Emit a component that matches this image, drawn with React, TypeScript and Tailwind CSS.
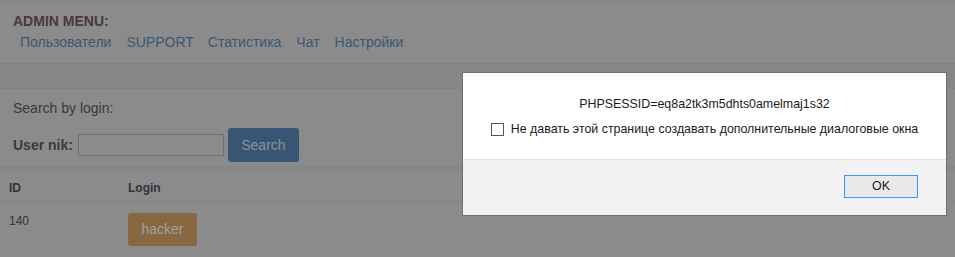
export default function App() {
  return (
    <div className="relative w-[955px] h-[257px] overflow-hidden bg-[#878787]" style={{ fontFamily: '"Liberation Sans", Arial, sans-serif' }}>
      <div className="pt-[2px]">
        <div className="h-[62px] bg-[#8b8b8b] border-b border-[#838383] pl-[13px] pt-[11px]">
          <div className="text-[14px] font-bold text-[#4a383a] leading-[16px]">ADMIN MENU:</div>
          <div className="flex gap-[15px] pl-[7px] mt-[5px] text-[14px] leading-[16px] text-[#3b5872]">
            <span>Пользователи</span>
            <span>SUPPORT</span>
            <span className="ml-[-1px]">Статистика</span>
            <span>Чат</span>
            <span>Настройки</span>
          </div>
        </div>
        <div className="h-[24px]" />
        <div className="h-[79px] bg-[#8b8b8b] border-y border-[#838383] pl-[13px] pt-[11px]">
          <div className="text-[14px] leading-[16px] text-[#3a3a3a]">Search by login:</div>
          <div className="flex items-center mt-[12px]">
            <span className="text-[14px] font-bold text-[#3d3842]">User nik:</span>
            <div className="ml-[5px] w-[146px] h-[22px] border border-[#6e6e6e] bg-[#8c8c8c]" />
            <div className="ml-[4px] w-[71px] h-[34px] rounded-[3px] bg-[#385673] flex items-center justify-center text-[14px] text-[#87929c]">Search</div>
          </div>
        </div>
        <div className="h-[3px]" />
        <div className="bg-[#8b8b8b] border-t border-[#848484]">
          <div className="flex h-[31px] items-center border-b border-[#838383] text-[12px] font-bold text-[#34343c] pt-[3px]">
            <div className="w-[128px] pl-[9px]">ID</div>
            <div>Login</div>
          </div>
          <div className="flex pt-[11px] text-[12px] text-[#363636] h-[60px]">
            <div className="w-[128px] pl-[9px] leading-[14px] pt-[1px]">140</div>
            <div className="w-[69px] h-[33px] rounded-[3px] bg-[#886841] flex items-center justify-center text-[14px] text-[#a0a0a0]">hacker</div>
          </div>
        </div>
      </div>

      <div className="absolute left-[462px] top-[72px] w-[485px] h-[144px] bg-white border border-[#6f6f6f] flex flex-col">
        <div className="h-[86px] flex flex-col items-center pt-[23px] text-[12.4px] text-[#1a1a1a] leading-[16px]">
          <div>PHPSESSID=eq8a2tk3m5dhts0amelmaj1s32</div>
          <div className="flex items-center mt-[9px]">
            <div className="w-[13px] h-[13px] border border-[#555] bg-white mr-[7px]" />
            <span>Не давать этой странице создавать дополнительные диалоговые окна</span>
          </div>
        </div>
        <div className="flex-1 bg-[#f2f2f2] border-t border-[#e4e4e4] flex justify-end items-start pt-[15px] pr-[28px]">
          <div className="w-[74px] h-[23px] border border-[#3c9af5] bg-[#e9e9e9] flex items-center justify-center text-[12.4px] text-[#1a1a1a]">OK</div>
        </div>
      </div>
    </div>
  );
}
